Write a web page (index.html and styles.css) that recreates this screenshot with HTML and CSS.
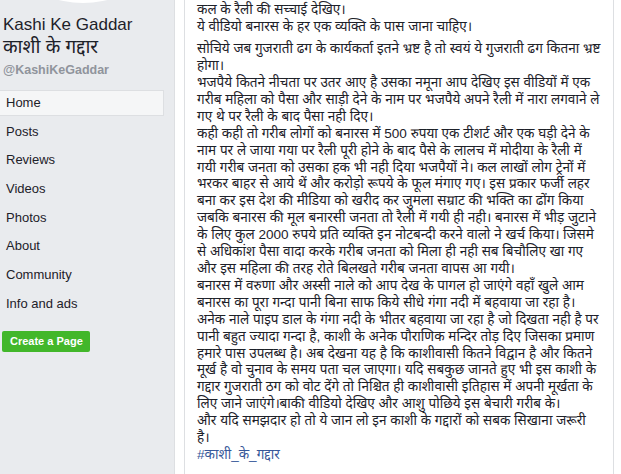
FILE: index.html
```html
<!doctype html>
<html lang="hi">
<head>
	<meta charset="utf-8">
	<meta name="viewport" content="width=device-width, initial-scale=1.0">
	<title>Kashi Ke Gaddar</title>
	<link rel="stylesheet" href="styles.css">
</head>
<body>
	<div id="pagewrap">

		<div id="sidebar">
			<div class="avatar"></div>
			<h1 class="page_name">Kashi Ke Gaddar<br><span class="hi">काशी के गद्दार</span></h1>
			<p class="handle">@KashiKeGaddar</p>

			<ul class="nav">
				<li class="active">Home</li>
				<li>Posts</li>
				<li>Reviews</li>
				<li>Videos</li>
				<li>Photos</li>
				<li>About</li>
				<li>Community</li>
				<li>Info and ads</li>
			</ul>

			<a class="create_page" href="#">Create a Page</a>
		</div>

		<div id="content">
			<div class="post">
				<p>कल के रैली की सच्चाई देखिए।<br>
				ये वीडियो बनारस के हर एक व्यक्ति के पास जाना चाहिए।</p>
				<p>सोचिये जब गुजराती ढग के कार्यकर्ता इतने भ्रष्ट है तो स्वयं ये गुजराती ढग कितना भ्रष्ट होगा।<br>
				भजपैये कितने नीचता पर उतर आए है उसका नमूना आप देखिए इस वीडियों में एक गरीब महिला को पैसा और साड़ी देने के नाम पर भजपैये अपने रैली में नारा लगवाने ले गए थे पर रैली के बाद पैसा नही दिए।<br>
				कही कही तो गरीब लोगों को बनारस में 500 रुपया एक टीशर्ट और एक घड़ी देने के नाम पर ले जाया गया पर रैली पूरी होने के बाद पैसे के लालच में मोदीया के रैली में गयी गरीब जनता को उसका हक भी नही दिया भजपैयों ने। कल लाखों लोग ट्रेनों में भरकर बाहर से आये थें और करोड़ो रूपये के फूल मंगाए गए। इस प्रकार फर्जी लहर बना कर इस देश की मीडिया को खरीद कर जुमला सम्राट की भक्ति का ढोंग किया जबकि बनारस की मूल बनारसी जनता तो रैली में गयी ही नही। बनारस में भीड़ जुटाने के लिए कुल 2000 रुपये प्रति व्यक्ति इन नोटबन्दी करने वालो ने खर्च किया। जिसमे से अधिकांश पैसा वादा करके गरीब जनता को मिला ही नही सब बिचौलिए खा गए और इस महिला की तरह रोते बिलखते गरीब जनता वापस आ गयी।<br>
				बनारस में वरुणा और अस्सी नाले को आप देख के पागल हो जाएंगे वहाँ खुले आम बनारस का पूरा गन्दा पानी बिना साफ किये सीधे गंगा नदी में बहवाया जा रहा है।<br>
				अनेक नाले पाइप डाल के गंगा नदी के भीतर बहवाया जा रहा है जो दिखता नही है पर पानी बहुत ज्यादा गन्दा है, काशी के अनेक पौराणिक मन्दिर तोड़ दिए जिसका प्रमाण हमारे पास उपलब्ध है। अब देखना यह है कि काशीवासी कितने विद्वान है और कितने मूर्ख है वो चुनाव के समय पता चल जाएगा। यदि सबकुछ जानते हुए भी इस काशी के गद्दार गुजराती ठग को वोट देंगे तो निश्चित ही काशीवासी इतिहास में अपनी मूर्खता के लिए जाने जाएंगे।बाकी वीडियो देखिए और आशु पोछिये इस बेचारी गरीब के।<br>
				और यदि समझदार हो तो ये जान लो इन काशी के गद्दारों को सबक सिखाना जरूरी है।<br>
				<a class="hashtag" href="#">#काशी_के_गद्दार</a></p>
			</div>
		</div>

	</div>
</body>
</html>
```

FILE: styles.css
```css
		body {
			margin: 0;
			background: #fff;
			color: #1d2129;
			font-family: "Liberation Sans", Arial, "Noto Sans Devanagari", "Lohit Devanagari", sans-serif;
		}
		a {
			text-decoration: none;
		}

		/* Default structure */
		#pagewrap {
			display: flex;
			height: 474px;
			overflow: hidden;
		}

		/* Left column */
		#sidebar {
			width: 174px;
			flex-shrink: 0;
			background: #e9ebee;
			border-right: 1px solid #dddfe2;
			overflow: hidden;
		}
		.avatar {
			width: 200px;
			height: 200px;
			margin: -197px 0 0 -17px;
			border-radius: 50%;
			background: #fff;
		}
		.page_name {
			margin: 11px 0 0 3px;
			font-size: 17px;
			line-height: 21.6px;
			font-weight: normal;
			color: #1d2129;
		}
		.page_name .hi {
			font-size: 19px;
		}
		.handle {
			margin: 4px 0 0 3px;
			font-size: 12.5px;
			line-height: 16px;
			font-weight: bold;
			color: #90949c;
		}
		.nav {
			list-style: none;
			margin: 12px 0 0 0;
			padding: 0;
		}
		.nav li {
			height: 26px;
			line-height: 26px;
			margin-bottom: 2.65px;
			padding-left: 6px;
			font-size: 13px;
			color: #1d2129;
		}
		.nav li.active {
			width: 157px;
			height: 24px;
			line-height: 24px;
			background: #f5f6f7;
			border: 1px solid #dddfe2;
			border-left: none;
		}
		.create_page {
			display: inline-block;
			margin: 12px 0 0 2px;
			padding: 0 7px 0 8px;
			height: 21px;
			line-height: 21px;
			border-radius: 2px;
			background: #42b72a;
			color: #fff;
			font-size: 11px;
			font-weight: bold;
		}

		/* Post column */
		#content {
			width: 428px;
			flex-shrink: 0;
			margin-left: 9px;
			border-left: 1px solid #dddfe2;
			border-right: 1px solid #dddfe2;
		}
		.post {
			padding: 2px 12px 0 12px;
		}
		.post p {
			margin: 0 0 5.4px 0;
			font-size: 13.55px;
			line-height: 16.9px;
		}
		.hashtag {
			color: #365899;
		}
```
